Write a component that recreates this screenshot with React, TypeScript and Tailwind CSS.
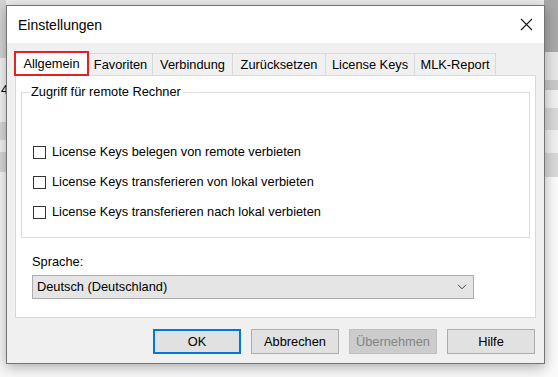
import React from "react";

const tabs = [
  { label: "Favoriten", w: "w-[64px]" },
  { label: "Verbindung", w: "w-[80px]" },
  { label: "Zurücksetzen", w: "w-[93px]" },
  { label: "License Keys", w: "w-[89px]" },
  { label: "MLK-Report", w: "w-[81px]" },
];

const options = [
  "License Keys belegen von remote verbieten",
  "License Keys transferieren von lokal verbieten",
  "License Keys transferieren nach lokal verbieten",
];

function Checkbox({ label }: { label: string }) {
  return (
    <label className="flex h-[30px] items-center gap-[6px]">
      <span className="h-[13px] w-[13px] border border-[#333333] bg-white" />
      <span>{label}</span>
    </label>
  );
}

function Button({
  children,
  kind = "normal",
}: {
  children: React.ReactNode;
  kind?: "normal" | "default" | "disabled";
}) {
  const styles =
    kind === "default"
      ? "border-2 border-[#0078d7] bg-[#e1e1e1] text-black"
      : kind === "disabled"
        ? "border border-[#bfbfbf] bg-[#cccccc] text-[#838383]"
        : "border border-[#adadad] bg-[#e1e1e1] text-black";
  return (
    <button
      className={`flex h-[25px] w-[88px] items-center justify-center ${styles}`}
    >
      {children}
    </button>
  );
}

export default function App() {
  return (
    <div
      className="relative h-[377px] w-[558px] overflow-hidden bg-[#f7f7f7] text-[12.8px] leading-[16px] text-black"
      style={{ fontFamily: '"Liberation Sans", Arial, sans-serif' }}
    >
      {/* desktop behind the dialog */}
      <div className="flex h-full w-full">
        <div className="flex w-[6px] flex-col">
          <div className="h-[58px] bg-[#d4d4d4]" />
          <div className="flex h-[64px] items-center bg-[#f4f4f4] pl-[1px] text-[13px]">
            4
          </div>
          <div className="h-[18px] bg-[#d8d8d8]" />
          <div className="h-[12px] bg-[#f4f4f4]" />
          <div className="h-[20px] bg-[#d8d8d8]" />
          <div className="flex-1 bg-[#f7f7f7]" />
        </div>
        <div className="flex flex-1 flex-col">
          <div className="h-[6px] bg-[#ececec]" />
          <div className="flex-1 bg-[#f7f7f7]" />
        </div>
        <div className="flex w-[14px] flex-col">
          <div className="h-[52px] bg-[#a8a8a8]" />
          <div className="h-[28px] bg-[#e6e6e6]" />
          <div className="h-[10px] bg-[#c8c8c8]" />
          <div className="h-[18px] bg-[#f0f0f0]" />
          <div className="h-[22px] bg-[#d8d8d8]" />
          <div className="h-[23px] bg-[#f0f0f0]" />
          <div className="h-[24px] bg-[#d8d8d8]" />
          <div className="flex-1 bg-[#fafafa]" />
        </div>
      </div>

      {/* dialog window */}
      <div className="absolute left-[6px] top-[5px] flex h-[359px] w-[539px] flex-col border border-[#747474] bg-[#f0f0f0] shadow-[0_3px_12px_rgba(0,0,0,0.3)]">
        <div className="flex h-[37px] items-center justify-between bg-white pl-[11px] pr-[11px]">
          <span className="text-[14px]">Einstellungen</span>
          <svg width="13" height="13" viewBox="0 0 13 13">
            <path
              d="M1 1 L12 12 M12 1 L1 12"
              stroke="#1a1a1a"
              strokeWidth="1.1"
              fill="none"
            />
          </svg>
        </div>

        <div className="flex flex-1 flex-col px-[8px] pt-[8px]">
          <div className="relative z-10 -ml-[1px] flex h-[24px] items-end">
            <div className="flex h-[25px] w-[75px] items-center justify-center self-start border-2 border-[#e3202a] bg-white">
              Allgemein
            </div>
            {tabs.map((t) => (
              <div
                key={t.label}
                className={`flex h-[22px] ${t.w} items-center justify-center border-r border-t border-[#d9d9d9] bg-[#f0f0f0] pt-[1px]`}
              >
                {t.label}
              </div>
            ))}
          </div>

          <div className="flex h-[243px] flex-col border border-[#d9d9d9] bg-white px-[5px]">
            <fieldset className="mt-[8px] border border-[#dcdcdc] pb-[10px] pl-[7px]">
              <legend className="px-[2px]">Zugriff für remote Rechner</legend>
              <div className="flex flex-col pl-[4px] pt-[37px]">
                {options.map((o) => (
                  <Checkbox key={o} label={o} />
                ))}
              </div>
            </fieldset>

            <div className="ml-[11px] mt-[16px]">Sprache:</div>
            <div className="ml-[11px] mt-[5px] flex h-[24px] w-[442px] items-center justify-between border border-[#adadad] bg-[#e5e5e5] pl-[4px] pr-[6px]">
              <span>Deutsch (Deutschland)</span>
              <svg width="10" height="6" viewBox="0 0 10 6">
                <path
                  d="M1 0.8 L5 4.8 L9 0.8"
                  stroke="#444"
                  strokeWidth="1"
                  fill="none"
                />
              </svg>
            </div>
          </div>

          <div className="mt-[11px] flex justify-end gap-[10px] pr-[1px]">
            <Button kind="default">OK</Button>
            <Button>Abbrechen</Button>
            <Button kind="disabled">Übernehmen</Button>
            <Button>Hilfe</Button>
          </div>
        </div>
      </div>
    </div>
  );
}
